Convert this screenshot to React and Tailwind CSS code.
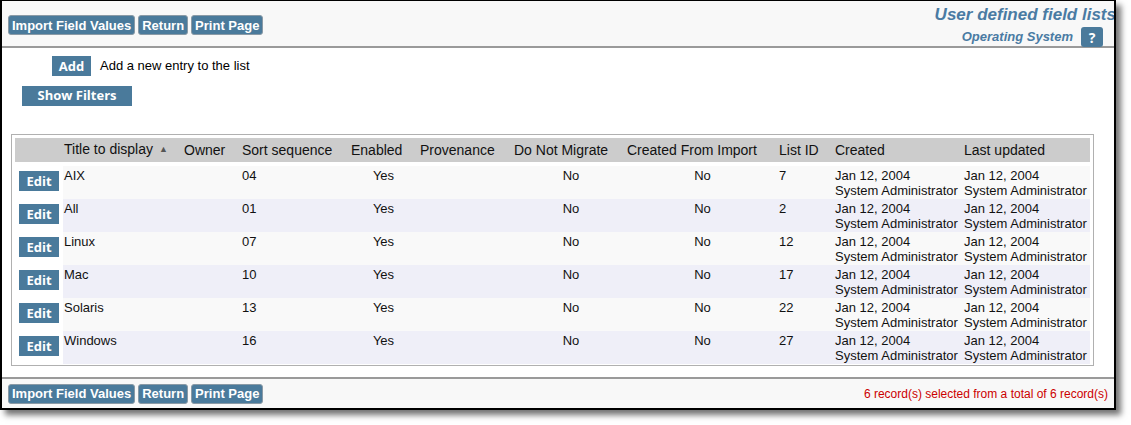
import React from 'react';

const rows = [
  { title: 'AIX', sort: '04', id: '7' },
  { title: 'All', sort: '01', id: '2' },
  { title: 'Linux', sort: '07', id: '12' },
  { title: 'Mac', sort: '10', id: '17' },
  { title: 'Solaris', sort: '13', id: '22' },
  { title: 'Windows', sort: '16', id: '27' },
];

const cols = [
  { label: '', w: 48 },
  { label: 'Title to display', w: 120, sort: true },
  { label: 'Owner', w: 58 },
  { label: 'Sort sequence', w: 109 },
  { label: 'Enabled', w: 69 },
  { label: 'Provenance', w: 94 },
  { label: 'Do Not Migrate', w: 113 },
  { label: 'Created From Import', w: 152 },
  { label: 'List ID', w: 56 },
  { label: 'Created', w: 129 },
  { label: 'Last updated', w: 127 },
];

const ToolButtons = () => (
  <div className="flex gap-[3px]">
    {['Import Field Values', 'Return', 'Print Page'].map(b => (
      <button key={b} className="h-[20px] px-[3px] bg-[#4a7a9b] text-white font-bold text-[13px] leading-none rounded-[3px] border border-[#8a9aa6]">
        {b}
      </button>
    ))}
  </div>
);

const Stamp = () => (
  <div className="leading-[15px]">
    <div>Jan 12, 2004</div>
    <div className="whitespace-nowrap">System Administrator</div>
  </div>
);

const App = () => {
  return (
    <div className="w-[1131px] h-[425px] bg-white font-['Liberation_Sans',Arial,sans-serif]">
      <div className="w-[1116px] h-[410px] border-l-2 border-t border-r-2 border-b-2 border-black shadow-[5px_5px_6px_rgba(0,0,0,0.55)] flex flex-col overflow-hidden bg-white">
        {/* top bar */}
        <div className="h-[47px] bg-[#f8f8f8] border-b-2 border-[#9a9a9a] flex justify-between">
          <div className="pt-[14px] pl-[6px]">
            <ToolButtons />
          </div>
          <div className="flex flex-col items-end pt-[4px] mr-[-2px]">
            <div className="text-[#4a7ba3] italic font-bold text-[17px] leading-[20px] whitespace-nowrap">User defined field lists</div>
            <div className="flex items-center mt-[2px] mr-[13px]">
              <span className="text-[#4a7ba3] italic font-bold text-[13px]">Operating System</span>
              <span className="ml-[8px] w-[22px] h-[20px] bg-[#4a7a9b] rounded-[3px] text-white font-bold text-[14px] flex items-center justify-center font-['Open_Sans',sans-serif]">?</span>
            </div>
          </div>
        </div>

        {/* body */}
        <div className="flex-1 bg-white">
          <div className="flex items-center h-[20px] pl-[50px] mt-[8px]">
            <button className="w-[39px] h-[20px] bg-[#4a7a9b] text-white font-bold text-[13px] leading-none font-['Open_Sans',sans-serif]">Add</button>
            <span className="ml-[9px] text-[13px] leading-[20px] text-black">Add a new entry to the list</span>
          </div>
          <div className="pl-[20px] mt-[7px] h-[20px]">
            <button className="w-[110px] h-[20px] bg-[#4a7a9b] text-white font-bold text-[13px] leading-none font-['Open_Sans',sans-serif]">Show Filters</button>
          </div>

          <div className="mt-[31px] ml-[9px] w-[1083px] h-[232px] border border-[#b0b0b0] p-[3px]">
            <table className="table-fixed border-collapse text-[#111]">
              <colgroup>
                {cols.map((c, i) => <col key={i} style={{ width: c.w }} />)}
              </colgroup>
              <thead>
                <tr className="h-[22px] bg-[#cccccc]">
                  {cols.map((c, i) => (
                    <th key={i} className="text-left font-normal text-[14px] leading-[22px] pl-[1px] whitespace-nowrap">
                      {c.label}
                      {c.sort && <span className="ml-[6px] text-[9px] text-[#555] relative top-[-2px]">▲</span>}
                    </th>
                  ))}
                </tr>
                <tr className="h-[4px]"><td colSpan={11} className="p-0 h-[4px]"></td></tr>
              </thead>
              <tbody className="text-[13px]">
                {rows.map((r, i) => (
                  <tr key={r.title} className="h-[33px] align-top">
                    <td className="bg-white pl-[4px] pt-[5px]">
                      <button className="w-[40px] h-[20px] bg-[#4a7a9b] text-white font-bold text-[13px] font-['Open_Sans',sans-serif] leading-none">Edit</button>
                    </td>
                    {[
                      <span>{r.title}</span>,
                      null,
                      r.sort,
                      <div className="text-center pr-[3px]">Yes</div>,
                      null,
                      <div className="text-center pl-[2px]">No</div>,
                      <div className="text-center">No</div>,
                      r.id,
                      <Stamp />,
                      <Stamp />,
                    ].map((v, j) => (
                      <td key={j} className={`pt-[2px] pl-[1px] leading-[15px] ${i % 2 === 0 ? 'bg-[#f9f9f9]' : 'bg-[#efeff8]'}`}>{v}</td>
                    ))}
                  </tr>
                ))}
              </tbody>
            </table>
          </div>
        </div>

        {/* footer */}
        <div className="h-[31px] bg-[#f8f8f8] border-t-2 border-[#9a9a9a] flex justify-between items-center">
          <div className="pl-[6px]">
            <ToolButtons />
          </div>
          <div className="text-[12px] text-[#cc0000] pr-[6px]">6 record(s) selected from a total of 6 record(s)</div>
        </div>
      </div>
    </div>
  );
};

export default App;
